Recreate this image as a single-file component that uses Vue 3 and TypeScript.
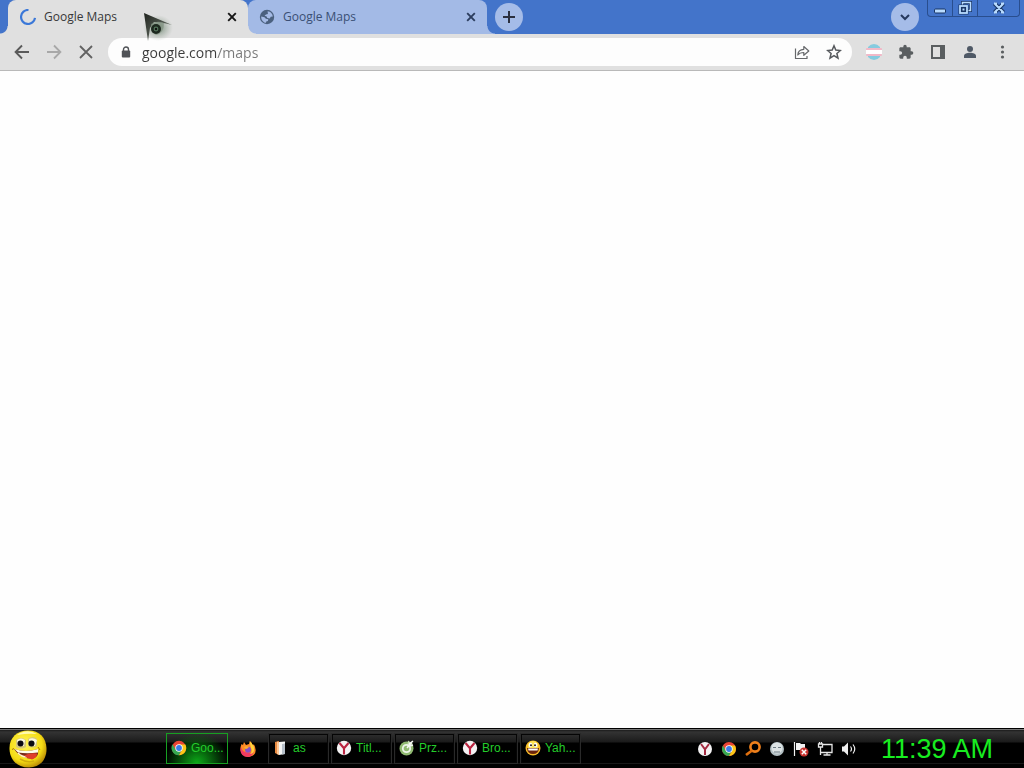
<script setup lang="ts">
import { ref } from 'vue'

interface Task {
  label: string
  icon: 'folder' | 'yandex' | 'disc' | 'grin'
}

const address = ref('google.com/maps')
const clock = ref('11:39 AM')

const tasks: Task[] = [
  { label: 'as', icon: 'folder' },
  { label: 'Titl...', icon: 'yandex' },
  { label: 'Prz...', icon: 'disc' },
  { label: 'Bro...', icon: 'yandex' },
  { label: 'Yah...', icon: 'grin' },
]
</script>

<template>
  <div class="desktop">
    <header class="tabstrip">
      <div class="tab active">
        <svg class="favicon" viewBox="0 0 16 16"><path d="M8.5 1A7 7 0 1 0 15 8.8" fill="none" stroke="#3b78d8" stroke-width="2.2" /></svg>
        <span class="title">Google Maps</span>
        <button class="close" aria-label="Close tab">
          <svg viewBox="0 0 10 10"><path d="M1.2 1.2l7.6 7.6M8.8 1.2L1.2 8.8" stroke="#161616" stroke-width="1.9" /></svg>
        </button>
      </div>
      <div class="tab idle">
        <svg class="favicon" viewBox="0 0 16 16">
          <circle cx="8" cy="8" r="7.2" fill="#4b617f" />
          <path d="M8.6 2.2c2.9.2 5 2.500 5.200 5.300l-2.100.2-.9 1.700-2.500-.3-.6-1.700-2.200-.7 1.500-1.100 1.900-.6zM2.200 7.400l3.300.8 1.400 1.600 2.400.5-.4 1.700-1.700.5-.2 1.300C4.200 13.300 2 11 2.200 7.400z" fill="#a5bbe6" />
        </svg>
        <span class="title">Google Maps</span>
        <button class="close" aria-label="Close tab">
          <svg viewBox="0 0 10 10"><path d="M1.2 1.2l7.6 7.6M8.8 1.2L1.2 8.8" stroke="#2c3d5e" stroke-width="1.9" /></svg>
        </button>
      </div>
      <button class="round new-tab" aria-label="New tab">
        <svg viewBox="0 0 14 14" width="14" height="14"><path d="M7 1v12M1 7h12" stroke="#2b3040" stroke-width="2" /></svg>
      </button>
      <button class="round search-tabs" aria-label="Search tabs">
        <svg viewBox="0 0 12 12" width="12" height="12"><path d="M2 4l4 4 4-4" fill="none" stroke="#26395e" stroke-width="2" /></svg>
      </button>
      <div class="window-controls">
        <button aria-label="Minimize">
          <svg viewBox="0 0 14 14" width="14" height="14"><rect x="1.5" y="8" width="11" height="4" rx="1" fill="#b9dcff" stroke="#193564" /></svg>
        </button>
        <button aria-label="Restore">
          <svg viewBox="0 0 14 14" width="14" height="14">
            <path d="M4.5 4V1.500h8v8H10" fill="none" stroke="#193564" stroke-width="3" />
            <path d="M4.5 4V1.500h8v8H10" fill="none" stroke="#b9dcff" stroke-width="1.500" />
            <rect x="2" y="5" width="7" height="7" fill="#193564" stroke="#193564" stroke-width="3" />
            <rect x="2" y="5" width="7" height="7" fill="#193564" stroke="#b9dcff" stroke-width="1.800" />
            <rect x="4.5" y="7.5" width="2" height="2" fill="#b9dcff" />
          </svg>
        </button>
        <button class="wide" aria-label="Close">
          <svg viewBox="0 0 14 14" width="14" height="14">
            <path d="M2.500 2.500l9 9M11.500 2.500l-9 9" stroke="#193564" stroke-width="4.200" />
            <path d="M3 3l8 8M11 3l-8 8M2 2.500h3M9 2.500h3M2 11.500h3M9 11.500h3" stroke="#b9dcff" stroke-width="2" />
          </svg>
        </button>
      </div>
    </header>

    <nav class="toolbar">
      <button class="tool" aria-label="Back">
        <svg viewBox="0 0 16 16"><path d="M15 8H2M8 1.500L1.600 8 8 14.500" fill="none" stroke="#5a5a5a" stroke-width="1.900" /></svg>
      </button>
      <button class="tool" aria-label="Forward">
        <svg viewBox="0 0 16 16"><path d="M1 8h13M8 1.500L14.400 8 8 14.500" fill="none" stroke="#a8a8a8" stroke-width="1.800" /></svg>
      </button>
      <button class="tool" aria-label="Stop">
        <svg viewBox="0 0 16 16"><path d="M2 2l12 12M14 2L2 14" stroke="#626262" stroke-width="1.800" /></svg>
      </button>
      <div class="omnibox">
        <svg class="lock" viewBox="0 0 10 12"><path d="M2.500 5V3.500a2.500 2.500 0 0 1 5 0V5" fill="none" stroke="#505357" stroke-width="1.400" /><rect x=".8" y="4.500" width="8.400" height="7" rx="1" fill="#505357" /></svg>
        <input v-model="address" class="url" type="text" aria-label="Address" spellcheck="false" />
        <button class="tool" aria-label="Share">
          <svg viewBox="0 0 16 16"><path d="M1.500 4.500v10h11.500V12M3.800 11c.2-3.800 2.500-5.600 6-5.700V2.500l5 4.500-5 4.300V8.500C7 8.500 5.200 9.200 3.800 11z" fill="none" stroke="#66686b" stroke-width="1.200" stroke-linejoin="round" /></svg>
        </button>
        <button class="tool" aria-label="Bookmark this tab">
          <svg viewBox="0 0 16 16"><path d="M8 1.800l1.800 4.300 4.600.4-3.500 3 1.100 4.600L8 11.700l-4 2.400 1.100-4.600-3.500-3 4.600-.4z" fill="none" stroke="#56595d" stroke-width="1.500" /></svg>
        </button>
      </div>
      <button class="tool" aria-label="Striped flag extension">
        <svg viewBox="0 0 16 16">
          <path d="M2 3q2.500-3 6-3t6 3v1H2z" fill="#86cbdf" />
          <rect y="4" width="16" height="3" rx="1" fill="#f2b9c8" />
          <rect y="6" width="16" height="4" fill="#fff" />
          <rect y="10" width="16" height="2" rx="1" fill="#f2b9c8" />
          <path d="M2 12h12v1q-2.500 3-6 3t-6-3z" fill="#86cbdf" />
        </svg>
      </button>
      <button class="tool" aria-label="Extensions">
        <svg viewBox="0 0 24 24"><path d="M20.500 11H19V7c0-1.100-.9-2-2-2h-4V3.500a2.500 2.500 0 0 0-5 0V5H4c-1.100 0-2 .9-2 2v3.800h1.500a2.700 2.700 0 0 1 0 5.400H2V20c0 1.100.9 2 2 2h3.800v-1.500a2.700 2.700 0 0 1 5.400 0V22H17c1.100 0 2-.9 2-2v-4h1.500a2.500 2.500 0 0 0 0-5z" fill="#5a5e60" /></svg>
      </button>
      <button class="tool" aria-label="Side panel">
        <svg viewBox="0 0 16 16"><rect x="2" y="2" width="12" height="12" fill="none" stroke="#5a5e60" stroke-width="2" /><rect x="10" y="2" width="4" height="12" fill="#5a5e60" /></svg>
      </button>
      <button class="tool" aria-label="Profile">
        <svg viewBox="0 0 16 16"><circle cx="8" cy="5" r="3" fill="#4f5966" /><path d="M2 14v-2c0-2.200 3-3.200 6-3.200s6 1 6 3.200v2z" fill="#4f5966" /></svg>
      </button>
      <button class="tool" aria-label="Menu">
        <svg viewBox="0 0 16 16" fill="#5a5e60"><circle cx="8.500" cy="3" r="1.600" /><circle cx="8.500" cy="8" r="1.600" /><circle cx="8.500" cy="13" r="1.600" /></svg>
      </button>
    </nav>

    <main class="page"></main>

    <footer class="taskbar">
      <button class="start" aria-label="Start">
        <svg viewBox="0 0 38 38">
          <defs>
            <radialGradient id="face" cx=".42" cy=".38" r=".65">
              <stop offset="0" stop-color="#fff75a" />
              <stop offset=".7" stop-color="#f5dc14" />
              <stop offset="1" stop-color="#b98a05" />
            </radialGradient>
          </defs>
          <path d="M19 .5C31 .5 37 8 37.500 18S32 37.500 20 37.500 1 30 .5 19 8 .5 19 .5z" fill="url(#face)" />
          <path d="M8 5q10-7 20-1-8-1-20 1z" fill="#fffab0" />
          <path d="M7 10q5-4 10 0v7q-5 3-10 0zM19 9q5-4 9 0v7q-4 3-9 0z" fill="#d6c878" />
          <path d="M8 10q4-3 8 0l-1 6H9zM20 9q4-2 8 1l-2 6h-5z" fill="#fbf8dc" />
          <circle cx="11.500" cy="13.500" r="3" fill="#0b0b12" />
          <circle cx="22.500" cy="13.500" r="3" fill="#0b0b12" />
          <path d="M5 19q12 4 24 0 1 5-2 8-5 3-12 0Q9 25 5 19z" fill="#7b2b18" />
          <path d="M5.500 19q11 4 23.500 0v3.500q-11 1.500-20 0z" fill="#fffce8" />
          <path d="M9 23q4 4 9 4" fill="none" stroke="#fff3cc" stroke-width="1.500" />
          <path d="M15 25.500q6-3 13-2 0 4.500-5 6-5-1-8-4z" fill="#df3e2b" />
          <path d="M29 17l2 3M4.500 18l-1 2" stroke="#a57807" />
          <path d="M11 29q7 4 14 2" fill="none" stroke="#d1ad0c" stroke-width="1.500" />
        </svg>
      </button>

      <div class="tasks">
        <button class="task current">
          <svg class="app-icon" viewBox="0 0 16 16">
            <circle cx="8" cy="8" r="7.200" fill="#e84435" />
            <path d="M1.500 4.300A7.300 7.300 0 0 0 8 15.200L11 9.500 8 11.500 4.800 9.800z" fill="#37a852" />
            <path d="M8 4.500h6.400A7.300 7.300 0 0 1 8 15.200L11.200 9.700z" fill="#fbc717" />
            <circle cx="8" cy="8" r="3.700" fill="#fff" /><circle cx="8" cy="8" r="2.900" fill="#3a7bea" />
          </svg>
          <span>Goo...</span>
        </button>
        <button class="firefox" aria-label="Firefox">
          <svg class="app-icon" viewBox="0 0 16 16">
            <path d="M1.500 3l1.500 1 1-3 2 3 3-1 1-3q2 1.500 2.500 4l1.500-.5Q18 11 12.500 14.800 7 17.500 2.500 13.500-1 9.500 1.500 3z" fill="#ff8b25" />
            <path d="M1 6q1 4 4 5 5 2 9-1-1.500 6-6.500 6Q1 15.500 .3 9z" fill="#f23b62" />
            <path d="M9.500.3q5.500 4 4.500 9.700-1 3-4 3 3-3 1-6z" fill="#ffd23d" />
            <circle cx="8" cy="8.800" r="3" fill="#8550c8" />
            <path d="M4 6q3-1.500 5 0L7 7.700 5.500 8z" fill="#ffb12c" />
          </svg>
        </button>
        <button v-for="(task, index) in tasks" :key="index" class="task">
          <svg v-if="task.icon === 'folder'" class="app-icon" viewBox="0 0 16 16">
            <path d="M2 2l4-1v14l-4-2z" fill="#e98b42" /><path d="M6 2l6-.5V14l-6 1z" fill="#f5f6f5" /><path d="M4 1.500l2 1V15l-2-1z" fill="#ffc997" /><path d="M9 4l3-.5V14l-3 .5z" fill="#b7c0c9" />
          </svg>
          <svg v-else-if="task.icon === 'yandex'" class="app-icon" viewBox="0 0 16 16">
            <circle cx="8" cy="8" r="7.200" fill="#f5f3f4" /><path d="M3.500 3L8 8.300 12.500 3M8 8v6.500" fill="none" stroke="#ba2440" stroke-width="2.100" />
          </svg>
          <svg v-else-if="task.icon === 'disc'" class="app-icon" viewBox="0 0 16 16">
            <circle cx="7.500" cy="8.500" r="7" fill="#91ba72" /><path d="M8 8l1-7.500L14 4z" fill="#c2dcae" /><circle cx="7.500" cy="8.500" r="3.700" fill="none" stroke="#edf5e8" stroke-width="1.800" /><path d="M8 8l5-6M10 4l4-3M11 6l3-1" stroke="#f5f8f2" stroke-width="1.500" />
          </svg>
          <svg v-else class="app-icon" viewBox="0 0 16 16">
            <circle cx="8" cy="8" r="7.500" fill="#f9bd29" /><circle cx="8" cy="6" r="5" fill="#ffe456" /><ellipse cx="5.500" cy="5" rx="1.800" ry="2.200" fill="#fff" /><ellipse cx="10.500" cy="5" rx="1.800" ry="2.200" fill="#fff" /><circle cx="6" cy="5.200" r="1" fill="#2d1b10" /><circle cx="10" cy="5.200" r="1" fill="#2d1b10" /><path d="M2 8h12q-.5 6-6 6T2 8z" fill="#6b230b" /><path d="M3 8.500h10l-.5 2h-9z" fill="#fff" />
          </svg>
          <span>{{ task.label }}</span>
        </button>
      </div>

      <div class="tray">
        <button aria-label="Yandex">
          <svg viewBox="0 0 16 16"><circle cx="8" cy="8" r="7" fill="#f5f3f4" /><path d="M4 3l4 5.300L12 3M8 8v6" fill="none" stroke="#a52b41" stroke-width="2" /></svg>
        </button>
        <button aria-label="Chrome">
          <svg viewBox="0 0 16 16"><circle cx="8" cy="8" r="7" fill="#e84435" /><path d="M2 4.400A7 7 0 0 0 8 15L11 9.500 8 11.500 4.800 9.800z" fill="#37a852" /><path d="M8 4.500h6A7 7 0 0 1 8 15L11.200 9.700z" fill="#fbc717" /><circle cx="8" cy="8" r="3.700" fill="#fff" /><circle cx="8" cy="8" r="2.900" fill="#3a7bea" /></svg>
        </button>
        <button aria-label="Search">
          <svg viewBox="0 0 16 16"><circle cx="10" cy="6" r="4.600" fill="none" stroke="#ef801c" stroke-width="2.600" /><path d="M7 9.500l-6 4.500" stroke="#e0700f" stroke-width="2.800" /></svg>
        </button>
        <button aria-label="Messenger">
          <svg viewBox="0 0 16 16"><circle cx="8" cy="8" r="7" fill="#b4c0c4" /><circle cx="8" cy="7" r="5.500" fill="#dde3e4" /><path d="M4 6.500h3M9 6.500h3M5 11h6" stroke="#6c7a82" stroke-width="1.200" /></svg>
        </button>
        <button aria-label="Action center">
          <svg viewBox="0 0 16 16"><path d="M1.500 1v14" stroke="#f3f3f3" stroke-width="1.200" /><path d="M3 2h4l1 1h4v6H3z" fill="#f3f3f3" /><circle cx="11" cy="11" r="4.500" fill="#c9322e" /><path d="M8.800 8.800l4.400 4.400M13.200 8.800l-4.400 4.400" stroke="#fff" stroke-width="1.500" /></svg>
        </button>
        <button aria-label="Network">
          <svg viewBox="0 0 16 16" fill="none" stroke="#e7e7e7" stroke-width="1.300"><path d="M6 3.500h9v8H4M10 11.500v2M6.500 14h7M1.500 3v3h4V3zM2.500 1v2M4.500 1v2M3.500 6v8" /></svg>
        </button>
        <button aria-label="Volume">
          <svg viewBox="0 0 16 16"><path d="M1 5.500h2l4-4v13l-4-4H1z" fill="#eee" /><path d="M9.500 5.500q2 2.500 0 5M12 3.500q3.500 4.500 0 9" fill="none" stroke="#eee" stroke-width="1.200" /></svg>
        </button>
      </div>
      <time class="clock">{{ clock }}</time>
    </footer>

    <svg class="pointer" viewBox="0 0 36 34" aria-hidden="true">
      <defs>
        <radialGradient id="shade">
          <stop offset="0" stop-color="#557058" stop-opacity=".8" />
          <stop offset="1" stop-color="#8fa18f" stop-opacity="0" />
        </radialGradient>
        <linearGradient id="blade" x2="1" y2="1">
          <stop offset="0" stop-color="#20241f" />
          <stop offset="1" stop-color="#7c857a" />
        </linearGradient>
      </defs>
      <ellipse cx="16" cy="18" rx="15" ry="13" fill="url(#shade)" />
      <path d="M2 3L30 15Q20 12 12 12L8 18 6 31Z" fill="url(#blade)" />
      <path d="M9 14q6-4 13-1 0 10-8 12-6-3-5-11z" fill="#7f907f" opacity=".7" />
      <circle cx="14" cy="19" r="5" fill="#1d291f" />
      <circle cx="14" cy="19" r="2.400" fill="#53735a" />
      <circle cx="14" cy="19" r="1.200" fill="#111" />
    </svg>
  </div>
</template>

<style>
html,
body {
  margin: 0;
  overflow: hidden;
}
</style>

<style scoped>
.desktop {
  position: relative;
  display: flex;
  flex-direction: column;
  height: 100vh;
  background: #fefefe;
  font-family: "Open Sans", "Noto Sans", sans-serif;
}
button {
  display: flex;
  align-items: center;
  justify-content: center;
  margin: 0;
  padding: 0;
  border: 0;
  background: none;
  color: inherit;
  font: inherit;
}
svg {
  display: block;
  flex: none;
}
.tabstrip {
  display: flex;
  align-items: center;
  height: 34px;
  padding: 0 4px 0 8px;
  background: #4374ca;
}
.tab {
  position: relative;
  display: flex;
  flex: 0 1 240px;
  box-sizing: border-box;
  align-items: center;
  height: 34px;
  padding: 0 11px 0 12px;
  border-radius: 8px 8px 0 0;
  font-size: 12px;
}
.active {
  background: #e0e0e0;
  color: #383838;
}
.active::before,
.active::after {
  position: absolute;
  bottom: 0;
  width: 8px;
  height: 8px;
  content: "";
}
.active::before {
  right: 100%;
  background: radial-gradient(circle at 0 0, transparent 7px, #e0e0e0 8px);
}
.active::after {
  left: 100%;
  z-index: 1;
  background: radial-gradient(circle at 100% 0, transparent 7px, #e0e0e0 8px);
}
.idle {
  flex-basis: 239px;
  padding-left: 11px;
  background: #a3bae6;
  color: #3a4f74;
}
.idle::after {
  position: absolute;
  bottom: 0;
  left: 100%;
  width: 8px;
  height: 8px;
  background: radial-gradient(circle at 100% 0, transparent 7px, #a3bae6 8px);
  content: "";
}
.favicon {
  width: 16px;
  height: 16px;
  margin-right: 8px;
}
.title {
  flex: 1;
  line-height: 20px;
}
.close svg {
  width: 10px;
  height: 10px;
}
.round {
  width: 28px;
  height: 28px;
  border-radius: 50%;
  background: #a5bce8;
}
.new-tab {
  margin-left: 8px;
}
.search-tabs {
  margin-left: auto;
}
.window-controls {
  display: flex;
  align-self: flex-start;
  box-sizing: border-box;
  height: 17px;
  margin-left: 8px;
  border: 1px solid #294e8e;
  border-top: 0;
  border-radius: 0 0 4px 4px;
}
.window-controls button {
  width: 25px;
  border-right: 1px solid #294e8e;
}
.window-controls button.wide {
  width: 41px;
  border-right: 0;
}
.toolbar {
  display: flex;
  box-sizing: border-box;
  align-items: center;
  height: 37px;
  padding: 0 6px;
  border-bottom: 1px solid #b9b9b9;
  background: #e0e0e0;
}
.tool {
  flex: none;
  width: 32px;
  height: 28px;
}
.tool svg {
  width: 16px;
  height: 16px;
}
.omnibox {
  display: flex;
  flex: 1;
  align-items: center;
  height: 28px;
  margin: 0 6px;
  padding: 0 2px 0 13px;
  border-radius: 14px;
  background: #fdfdfd;
}
.lock {
  width: 10px;
  height: 12px;
}
.url {
  flex: 1;
  min-width: 0;
  height: 22px;
  margin-left: 11px;
  padding: 0;
  border: 0;
  outline: 0;
  background: linear-gradient(90deg, #3c3c3c 75px, #787878 75px);
  background-clip: text;
  color: transparent;
  caret-color: #333;
  font-family: inherit;
  font-size: 14px;
}
.page {
  flex: 1;
  background: #fefefe;
}
.taskbar {
  display: flex;
  box-sizing: border-box;
  align-items: center;
  height: 40px;
  padding-left: 9px;
  border-top: 1px solid #000;
  background: linear-gradient(#777 0 1px, #1b1b1b 1px, #333 3px, #1b1b1b 13px, #000 14px 34px, #181818 34px 35px, #000 35px);
  color: #24cd2b;
  font-family: "Liberation Sans", Arial, sans-serif;
}
.start svg {
  width: 38px;
  height: 38px;
}
.tasks {
  display: flex;
  gap: 2px;
  margin-left: 119px;
}
.task {
  box-sizing: border-box;
  width: 61px;
  height: 31px;
  padding: 0 0 2px 4px;
  justify-content: flex-start;
  gap: 4px;
  border: 1px solid #292929;
  box-shadow: inset 0 0 0 1px #050505;
  font-size: 12px;
  white-space: nowrap;
}
.current {
  width: 62px;
  border-color: #17a022;
  background: radial-gradient(ellipse at 50% 100%, #0cab18 0, #075c0c 35%, transparent 75%);
  box-shadow: none;
}
.firefox {
  width: 36px;
}
.app-icon {
  width: 16px;
  height: 16px;
}
.tray {
  display: flex;
  margin-left: auto;
}
.tray button {
  width: 24px;
  height: 24px;
}
.tray svg {
  width: 16px;
  height: 16px;
}
.clock {
  box-sizing: border-box;
  width: 163px;
  padding-left: 20px;
  color: #18ed20;
  font-size: 27px;
  line-height: 36px;
}
.pointer {
  position: absolute;
  top: 10px;
  left: 142px;
  width: 36px;
  height: 34px;
  pointer-events: none;
}
</style>
